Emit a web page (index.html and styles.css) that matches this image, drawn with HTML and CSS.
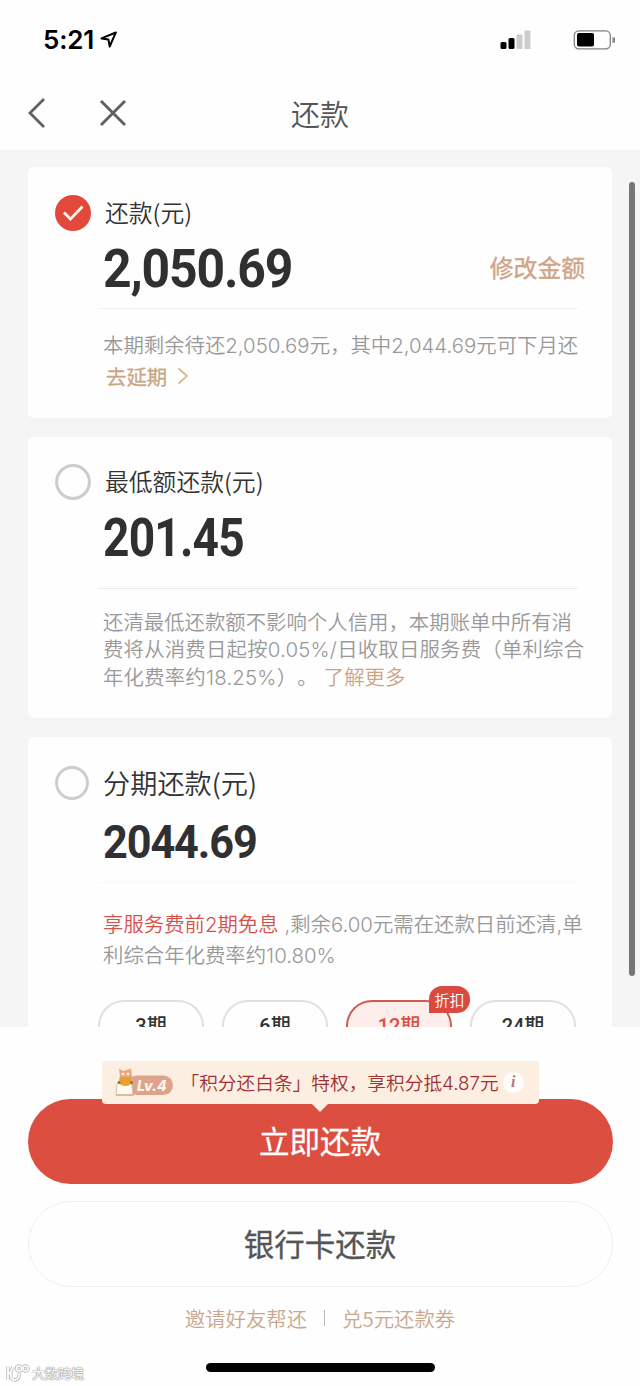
FILE: index.html
```html
<!DOCTYPE html>
<html lang="zh-CN">
<head>
<meta charset="utf-8">
<title>还款</title>
<link rel="stylesheet" href="styles.css">
</head>
<body>
<div class="phone">
  <header class="top">
    <div class="status">
      <span class="clock">5:21</span>
      <svg class="loc" width="18" height="18" viewBox="0 0 18 18"><path d="M1.500 7.400 15.800 1.500 9.700 15.500 8.400 8.400Z" fill="none" stroke="#000" stroke-width="2" stroke-linejoin="round"/></svg>
      <svg class="signal" width="31" height="20" viewBox="0 0 31 20"><rect x="0.500" y="12" width="6" height="7" rx="1.500"/><rect x="8.500" y="8" width="6" height="11" rx="1.500"/><rect x="16.500" y="4.500" width="6" height="14.500" rx="1" fill="#ccc"/><rect x="24.500" y="0.500" width="6" height="18.500" rx="1" fill="#ccc"/></svg>
      <svg class="battery" width="42" height="20" viewBox="0 0 42 20"><rect x="1.300" y="0.800" width="36" height="18" rx="4.500" fill="none" stroke="#808080" stroke-width="1.300"/><rect x="4" y="3" width="17" height="13.500" rx="2"/><path d="M39.500 7a2.800 2.800 0 0 1 0 6z" fill="#888"/></svg>
    </div>
    <nav class="nav">
      <svg width="20" height="32" viewBox="0 0 20 32"><path d="M18 2 4 16 18 30" fill="none" stroke="#606060" stroke-width="2.800"/></svg>
      <svg class="close" width="28" height="28" viewBox="0 0 28 28"><path d="M2 2 26 26M26 2 2 26" fill="none" stroke="#606060" stroke-width="2.900"/></svg>
      <h1 class="title">还款</h1>
    </nav>
  </header>

  <main class="list">
    <div class="scrollbar"></div>
    <section class="card card-full">
      <svg class="radio" width="36" height="36" viewBox="0 0 36 36"><circle cx="18" cy="18" r="18" fill="#e2483c"/><path d="M9 17.500 15.500 24 27.500 11.500" fill="none" stroke="#fff3ee" stroke-width="2.800"/></svg>
      <div class="body">
        <h2 class="label">还款(元)</h2>
        <div class="row"><span class="amount">2,050.69</span><a class="edit">修改金额</a></div>
        <hr class="line">
        <p class="note">本期剩余待还2,050.69元，其中2,044.69元可下月还</p>
        <a class="delay">去延期<svg width="12" height="18" viewBox="0 0 12 18"><path d="M1.500 1.500 10 9 1.500 16.500" fill="none" stroke="#d2bd88" stroke-width="1.800"/></svg></a>
      </div>
    </section>

    <section class="card card-min">
      <svg class="radio" width="36" height="36" viewBox="0 0 36 36"><circle cx="18" cy="18" r="16.400" fill="none" stroke="#ccc" stroke-width="3"/></svg>
      <div class="body">
        <h2 class="label">最低额还款(元)</h2>
        <div class="row"><span class="amount">201.45</span></div>
        <hr class="line">
        <p class="note">还清最低还款额不影响个人信用，本期账单中所有消<br><span class="wide">费将从消费日起按0.05%/日收取日服务费（单利综合<br>年化费率约18.25%）。</span><a class="more">了解更多</a></p>
      </div>
    </section>

    <section class="card card-split">
      <svg class="radio" width="34" height="34" viewBox="0 0 36 36"><circle cx="18" cy="18" r="16.400" fill="none" stroke="#ccc" stroke-width="3"/></svg>
      <div class="body">
        <h2 class="label">分期还款(元)</h2>
        <div class="row"><span class="amount">2044.69</span></div>
        <hr class="line">
        <p class="note"><span class="promo">享服务费前2期免息</span> ,剩余6.00元需在还款日前还清,单<br>利综合年化费率约10.80%</p>
        <div class="terms">
          <span class="term">3期</span><span class="term">6期</span><span class="term active">12期<b class="tag">折扣</b></span><span class="term">24期</span>
        </div>
      </div>
    </section>
  </main>

  <footer class="foot">
    <button class="pay"><span class="cap">立即还款</span>
      <span class="tip">
        <svg class="level" width="58" height="32" viewBox="0 0 58 32"><rect x="12" y="8.500" width="46" height="19.500" rx="9.700" fill="#dea38b"/><path d="M2 17 6 11 16 11 18 28H1Z" fill="#fffaf0" stroke="#d8c3a1"/><path d="M4 1.500 8 4 13 2.500 16 1.500 17 10 5 10Z" fill="#efa57d"/><path d="M4.500 10h12v7q-6 4-12 0Z" fill="#eaa02f"/><circle cx="8" cy="7" r="1.300" fill="#fff"/><circle cx="13" cy="7" r="1.300" fill="#fff"/><circle cx="4" cy="15.500" r="1.300" fill="#665"/><circle cx="16.500" cy="15.500" r="1.300" fill="#665"/><path d="M1 28h18" stroke="#bda17e"/><text class="lv" x="22" y="23.500">Lv.4</text></svg>
        <span class="tip-text">「积分还白条」特权，享积分抵4.87元</span>
        <i class="info">i</i>
      </span>
    </button>
    <button class="bank"><span class="cap">银行卡还款</span></button>
    <div class="links"><a class="invite">邀请好友帮还</a><i class="sep"></i><a class="coupon">兑5元还款券</a></div>
    <div class="home"></div>
  </footer>
  <div class="mark"><svg width="24" height="18" viewBox="0 0 24 18" fill="none" stroke="#bdbdbd" stroke-width="3.400"><path d="M2 2v14M2 10Q5 9 7 3M5 9Q4 16 9 16 14 15 13 9"/><circle cx="13" cy="4.500" r="2.500"/><circle cx="19.500" cy="4.500" r="2.500"/><path stroke="#fff" stroke-width="1.700" d="M2 2v14M2 10Q5 9 7 3M5 9Q4 16 9 16 14 15 13 9"/><g stroke="#fff" stroke-width="1.500"><circle cx="13" cy="4.500" r="2.500"/><circle cx="19.500" cy="4.500" r="2.500"/></g></svg><span>大数跨境</span></div>
</div>
</body>
</html>
```

FILE: styles.css
```css
* { box-sizing: border-box; margin: 0; padding: 0; }
body { font-family: "Noto Sans CJK SC", sans-serif; background: #fefefe; color: #333; text-spacing-trim: space-all; }
a, span, h1, h2, p { white-space: nowrap; }
svg { display: block; flex: none; }

.phone { position: relative; width: 640px; height: 1386px; overflow: hidden; display: flex; flex-direction: column; background: #fefefe; }
.top { height: 150px; flex: none; }
.status { height: 78px; display: flex; align-items: center; padding: 1px 25px 0 43px; }
.clock { font: 600 26px/30px Inter, sans-serif; color: #000; width: 51px; letter-spacing: -0.200px; }
.loc { margin: 0 auto 0 6px; }
.signal { margin-right: 42px; }
.nav { height: 70px; display: flex; align-items: center; padding-left: 26px; }
.close { margin-left: 53px; }
.title { font-size: 29px; font-weight: 350; line-height: 40px; color: #555; margin: -1px 0 0 164px; }

.list { position: relative; height: 877px; flex: none; overflow: hidden; background: #f5f5f5; padding: 17px 28px 0; display: flex; flex-direction: column; gap: 19px; }
.scrollbar { position: absolute; left: 629px; top: 32px; width: 6px; height: 794px; border-radius: 3px; background: #777; }
.card { flex: none; display: flex; align-items: flex-start; gap: 12px; background: #fefefe; border-radius: 6px; padding: 27px 26px 0 27px; }
.radio { margin-top: 1px; }
.card-full { height: 251px; }
.card-min { height: 281px; padding-top: 26px; }
.card-split { height: 360px; padding-top: 28px; gap: 14px; }
.body { width: 484px; flex: none; }
.label { font-size: 23.800px; font-weight: 350; line-height: 36px; padding-left: 2px; }
.row { display: flex; align-items: center; justify-content: space-between; height: 78px; }
.amount { display: inline-block; font: 700 53px/60px Roboto, sans-serif; color: #303032; transform: scaleX(.94); transform-origin: 0 50%; letter-spacing: -1.200px; }
.card-min .amount { transform: scaleX(.87); letter-spacing: -.900px; }
.edit { font-size: 23.800px; font-weight: 400; -webkit-text-stroke: .4px; color: #cfa588; line-height: 36px; margin: -5px 2px 0 0; }
.line { border: 0; height: 1px; background: #f2f2f2; width: 480px; margin-left: -5px; }
.note { font-family: Inter, "Noto Sans CJK SC", sans-serif; font-size: 20.400px; font-weight: 350; line-height: 27px; color: #999; }
.card-full .note { margin-top: 23px; }
.delay { display: flex; align-items: center; gap: 10px; font-size: 20.400px; font-weight: 400; -webkit-text-stroke: .3px; line-height: 30px; color: #caa684; margin: 2px 0 0 3px; }
.card-min .line { margin-top: 11px; background: #ebebeb; }
.card-min .note { margin-top: 20px; line-height: 27.400px; }
.wide { letter-spacing: .200px; }
.more { color: #cda384; margin-left: 6px; }
.card-split .label { font-size: 27.200px; line-height: 34px; padding: 0 0 2px; }
.card-split .row { height: 81px; }
.card-split .amount { font-size: 47px; transform: scaleX(.92); }
.card-split .line { background: #f8f8f8; }
.card-split .note { margin-top: 26px; line-height: 31px; }
.promo { color: #d8504a; }
.terms { display: flex; gap: 18px; margin: 29px 0 0 -5px; }
.term { position: relative; width: 106px; height: 62px; border: 2px solid #e0e0e0; border-radius: 26px; text-align: center; font: 500 20px/49px Roboto, "Noto Sans CJK SC", sans-serif; color: #333; }
.active { border-color: #d15b51; color: #d8504a; background: #fdeeec; }
.tag { position: absolute; left: 81px; top: -16px; width: 41px; height: 27px; border-radius: 13px 13px 13px 0; background: #db4a3f; color: #fff; font: 350 15px/27px "Noto Sans CJK SC", sans-serif; }

.foot { display: flex; flex-direction: column; align-items: center; padding-top: 72px; }
button { border: 0; font-family: "Noto Sans CJK SC", sans-serif; border-radius: 43px; width: 585px; }
.cap { display: block; margin-top: -3px; -webkit-text-stroke: .3px; }
.pay { position: relative; height: 85px; background: #dc4e40; color: #fff; font-size: 30.500px; font-weight: 400; }
.tip { position: absolute; left: 74px; top: -38px; width: 437px; height: 43px; border-radius: 4px; background: #fdeee2; display: flex; align-items: center; padding-left: 13px; }
.tip::after { content: ""; position: absolute; left: 209px; top: 42px; border: 9px solid transparent; border-top-color: #fdeee2; border-bottom: 0; }
.lv { font: italic 800 14px Inter, sans-serif; fill: #fff6ed; }
.tip-text { font-family: Inter, "Noto Sans CJK SC", sans-serif; font-size: 18.700px; font-weight: 350; color: #9e3134; margin: -2px 0 0 8px; }
.info { margin-left: 4px; width: 21px; height: 21px; border-radius: 50%; background: #fffdfa; font: italic 700 16px/20px "Liberation Serif", serif; color: #be7472; }
.bank { height: 86px; margin-top: 17px; background: #fefefe; border: 1.500px solid #efefef; color: #555; font-size: 30.500px; font-weight: 400; }
.links { display: flex; align-items: center; height: 30px; margin-top: 16px; font-size: 20.400px; font-weight: 350; color: #c9a88c; }
.sep { width: 1px; height: 16px; background: #bbb; margin: 0 17px; }
.home { width: 229px; height: 9px; border-radius: 5px; background: #000; margin-top: 30px; }
.mark { position: absolute; left: 6px; top: 1363px; display: flex; align-items: center; gap: 2px; font-size: 13px; line-height: 20px; color: #fff; text-shadow: 0 0 1px #888, 0 0 1px #888, 0 0 2px #aaa; }
```
